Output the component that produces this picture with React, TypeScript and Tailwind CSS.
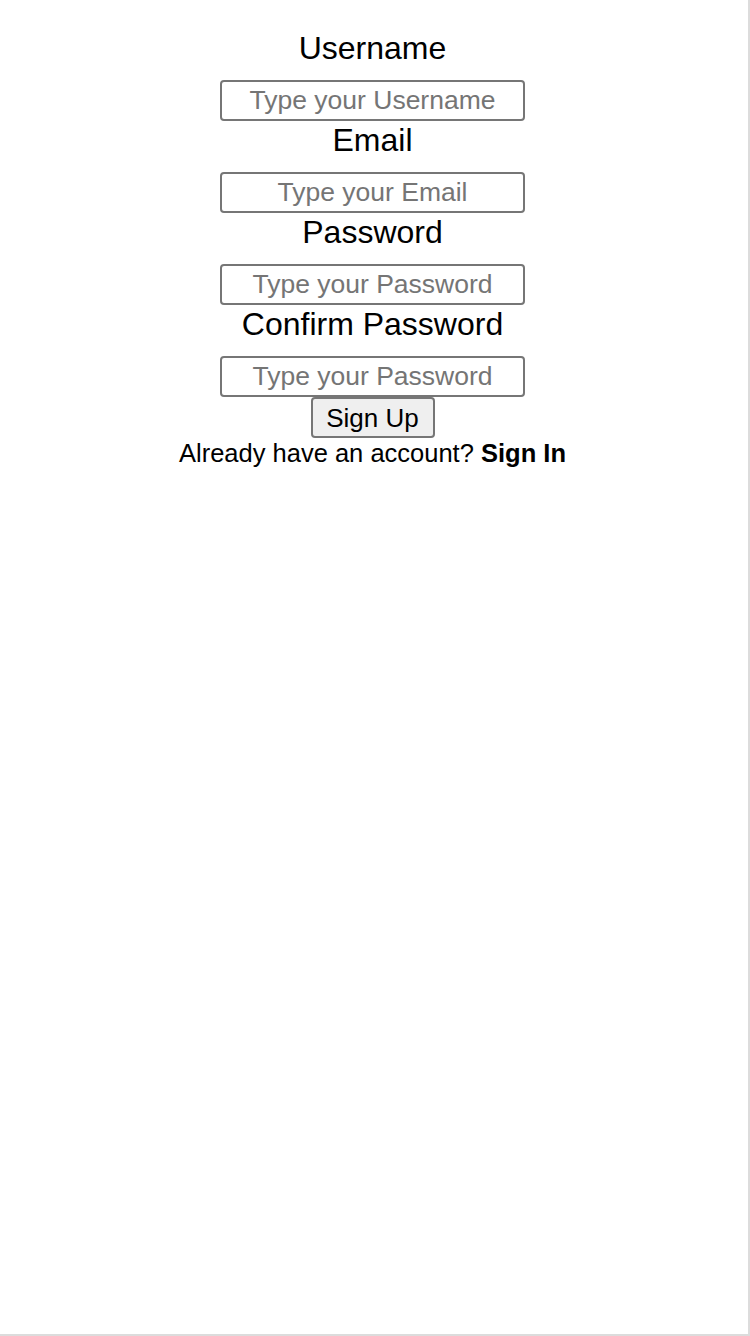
export default function App() {
  const fields = [
    { label: "Username", type: "text", placeholder: "Type your Username" },
    { label: "Email", type: "email", placeholder: "Type your Email" },
    { label: "Password", type: "password", placeholder: "Type your Password" },
    { label: "Confirm Password", type: "password", placeholder: "Type your Password" },
  ];

  return (
    <div className="w-[750px] h-[1336px] pr-[3px] bg-white border-r-2 border-b-2 border-[#dcdcdc] font-['Liberation_Sans',Arial,sans-serif] text-black">
      <form className="flex flex-col items-center pt-[29px]">
        {fields.map((f) => (
          <div key={f.label} className="flex flex-col items-center">
            <label className="text-[32px] leading-[38px] mb-[13px]">{f.label}</label>
            <input
              type={f.type}
              placeholder={f.placeholder}
              className="w-[305px] h-[41px] border-2 border-[#767676] rounded-[4px] text-center text-[26.5px] placeholder:text-[#757575] outline-none"
            />
          </div>
        ))}
        <button
          type="button"
          className="w-[124px] h-[41px] bg-[#efefef] border-2 border-[#767676] rounded-[4px] text-[26px] leading-none"
        >
          Sign Up
        </button>
        <p className="text-[25.5px] leading-[30px]">
          Already have an account? <span className="font-bold">Sign In</span>
        </p>
      </form>
    </div>
  );
}
